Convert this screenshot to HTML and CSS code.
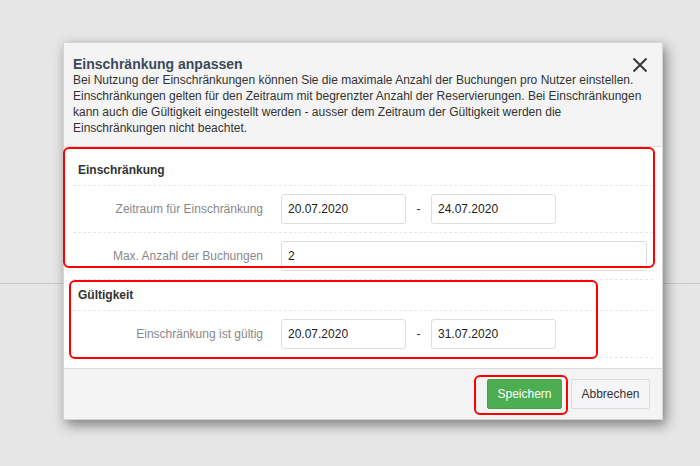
FILE: index.html
```html
<!DOCTYPE html>
<html lang="de">
<head>
    <meta charset="UTF-8">
    <meta name="viewport" content="width=device-width, initial-scale=1.0">
    <title>Einschränkung anpassen</title>
    <link rel="stylesheet" href="styles.css">
</head>
<body>
    <div class="page"></div>

    <div class="modal">
        <div class="modal-header">
            <button class="close" aria-label="Schließen">
                <svg width="16" height="16" viewBox="0 0 16 16">
                    <path d="M1.5 1.5 L14.5 14.5 M14.5 1.5 L1.5 14.5" stroke="#333" stroke-width="1.8" fill="none"/>
                </svg>
            </button>
            <h4 class="modal-title">Einschränkung anpassen</h4>
            <p class="modal-text">Bei Nutzung der Einschränkungen können Sie die maximale Anzahl der Buchungen pro Nutzer einstellen. Einschränkungen gelten für den Zeitraum mit begrenzter Anzahl der Reservierungen. Bei Einschränkungen kann auch die Gültigkeit eingestellt werden - ausser dem Zeitraum der Gültigkeit werden die Einschränkungen nicht beachtet.</p>
        </div>

        <div class="modal-body">
            <div class="section-title first">Einschränkung</div>
            <div class="form-row">
                <label class="form-label">Zeitraum für Einschränkung</label>
                <input class="form-input short" type="text" value="20.07.2020">
                <span class="range-sep">-</span>
                <input class="form-input short" type="text" value="24.07.2020">
            </div>
            <div class="form-row">
                <label class="form-label">Max. Anzahl der Buchungen</label>
                <input class="form-input wide" type="text" value="2">
            </div>

            <div class="section-title">Gültigkeit</div>
            <div class="form-row">
                <label class="form-label">Einschränkung ist gültig</label>
                <input class="form-input short" type="text" value="20.07.2020">
                <span class="range-sep">-</span>
                <input class="form-input short" type="text" value="31.07.2020">
            </div>
        </div>

        <div class="modal-footer">
            <button class="btn btn-primary">Speichern</button>
            <button class="btn btn-default">Abbrechen</button>
        </div>
    </div>

    <!-- Markierungen -->
    <div class="mark mark-1"></div>
    <div class="mark mark-2"></div>
    <div class="mark mark-3"></div>
</body>
</html>
```

FILE: styles.css
```css
* {
    box-sizing: border-box;
}

body {
    margin: 0;
    width: 700px;
    height: 466px;
    overflow: hidden;
    background: #e6e6e6;
    font-family: "Liberation Sans", Arial, sans-serif;
    font-size: 12px;
    color: #333;
}

.page {
    height: 284px;
    border-bottom: 1px solid #c9c9c9;
}

.modal {
    position: absolute;
    top: 42px;
    left: 63px;
    width: 600px;
    background: #fff;
    border: 1px solid #d4d4d4;
    box-shadow: 3px 5px 12px rgba(0, 0, 0, 0.45);
}

.modal-header {
    position: relative;
    background: #f4f4f4;
    padding: 13px 10px 10px 9px;
    border-bottom: 1px solid #ddd;
}

.modal-title {
    margin: 0;
    font-size: 14px;
    line-height: 16px;
    font-weight: bold;
    color: #3b4a5a;
}

.modal-text {
    margin: 0;
    font-size: 12px;
    line-height: 16px;
    color: #333;
}

.close {
    position: absolute;
    top: 14px;
    right: 14px;
    padding: 0;
    border: none;
    background: none;
    cursor: pointer;
    line-height: 0;
}

.modal-body {
    padding: 0 9px 10px 9px;
}

.section-title {
    padding: 7px 5px 7px 5px;
    font-weight: bold;
    line-height: 16px;
    color: #333;
    border-bottom: 1px dashed #e8e8e8;
}

.section-title.first {
    padding-top: 15px;
}

.form-row {
    display: flex;
    align-items: center;
    padding: 8px 6px 8px 0;
    border-bottom: 1px dashed #e8e8e8;
}

.form-label {
    width: 190px;
    margin-right: 18px;
    text-align: right;
    color: #888;
}

.form-input {
    height: 30px;
    padding: 0 6px;
    border: 1px solid #ddd;
    border-radius: 3px;
    font-family: inherit;
    font-size: 12px;
    color: #222;
    background: #fff;
}

.form-input.short {
    width: 125px;
}

.form-input.wide {
    flex: 1;
}

.range-sep {
    width: 25px;
    text-align: center;
    color: #333;
}

.modal-footer {
    display: flex;
    justify-content: flex-end;
    gap: 9px;
    padding: 10px 12px 10px 10px;
    background: #f4f4f4;
    border-top: 1px solid #ddd;
}

.btn {
    height: 30px;
    padding: 0 9px;
    border-radius: 2px;
    font-family: inherit;
    font-size: 12px;
    cursor: pointer;
}

.btn-primary {
    width: 75px;
    background: #4cae50;
    border: 1px solid #45a449;
    color: #fff;
}

.btn-default {
    width: 79px;
    background: #f5f5f8;
    border: 1px solid #dcdcdc;
    color: #333;
}

.mark {
    position: absolute;
    border: 2px solid #f00;
    border-radius: 6px;
}

.mark-1 {
    left: 63px;
    top: 147px;
    width: 592px;
    height: 121px;
}

.mark-2 {
    left: 69px;
    top: 280px;
    width: 529px;
    height: 79px;
}

.mark-3 {
    left: 474px;
    top: 375px;
    width: 94px;
    height: 40px;
}
```
